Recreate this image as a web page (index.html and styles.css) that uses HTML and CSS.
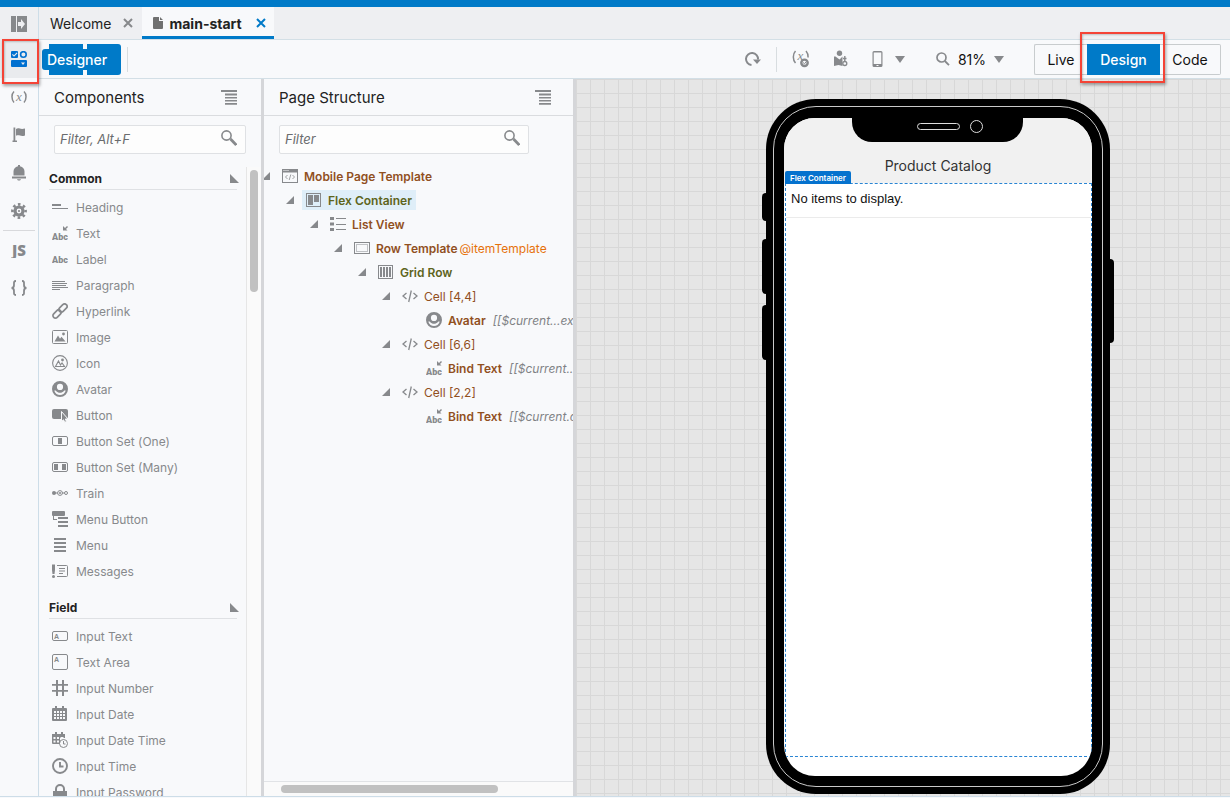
FILE: index.html
```html
<!DOCTYPE html>
<html lang="en">
<head>
<meta charset="utf-8">
<title>main-start - Designer</title>
<link rel="stylesheet" href="styles.css">
</head>
<body>
<svg class="sprite" aria-hidden="true">
  <symbol id="i-expand" viewBox="0 0 16 16"><path d="M0 0h5v16H0zM6 0h10v16H6zM7 6v4h3v3l4-5-4-5v3z" fill-rule="evenodd"/></symbol>
  <symbol id="i-parts" viewBox="0 0 16 16"><path fill-rule="evenodd" d="M1 0h5a1 1 0 0 1 1 1v5a1 1 0 0 1-1 1H1a1 1 0 0 1-1-1V1a1 1 0 0 1 1-1zM1 3.800l2 2 3.500-3.500-.8-.8L3 4.200l-1.200-1.200zM1 9h14a1 1 0 0 1 1 1v5a1 1 0 0 1-1 1H1a1 1 0 0 1-1-1v-5a1 1 0 0 1 1-1zM10 11.500l2 2.500 2-2.500z"/><circle cx="12.400" cy="3.500" r="2.800" fill="none" stroke="currentColor" stroke-width="1.600"/></symbol>
  <symbol id="i-var" viewBox="0 0 16 16"><path d="M3 2.500C.3 5 .3 10.500 3 13.500M13 2.500c2.700 2.500 2.700 8 0 11" fill="none" stroke="currentColor" stroke-width="1.500"/><text x="8" y="11.500" text-anchor="middle" class="glyph-x">x</text></symbol>
  <symbol id="i-flag" viewBox="0 0 16 16"><path d="M2.500 .5h1.800v13H6V15H1.500v-1.500h1zM5 2c3-1.800 4 1 9-.5v7c-4.500 1.800-5.500-1.200-9 .3z"/></symbol>
  <symbol id="i-bell" viewBox="0 0 16 16"><path d="M7 0h2v1.200c3 .6 4.500 2.800 4.500 5.300v4h-11v-4C2.500 4 4 1.800 7 1.200zM1 11.500h14v2H1zM6 14.200h4c-.4 1.800-3.600 1.800-4 0z"/></symbol>
  <symbol id="i-gear" viewBox="0 0 16 16"><g fill="none" stroke="currentColor"><circle cx="8" cy="8" r="4" stroke-width="3.200"/><circle cx="8" cy="8" r="6.600" stroke-width="2.600" stroke-dasharray="2.600 2.583" stroke-dashoffset="1.300"/></g><circle cx="8" cy="8" r="1.100"/></symbol>
  <symbol id="i-js" viewBox="0 0 16 16"><text x="8" y="13.500" text-anchor="middle" class="glyph-js">JS</text></symbol>
  <symbol id="i-braces" viewBox="0 0 16 16"><path d="M5 1C2.500 1 3 3 3 5c0 2-.8 3-2.500 3C2.200 8 3 9 3 11c0 2-.5 4 2 4M11 1c2.500 0 2 2 2 4 0 2 .8 3 2.500 3-1.700 0-2.500 1-2.500 3 0 2 .5 4-2 4" fill="none" stroke="currentColor" stroke-width="1.800"/></symbol>
  <symbol id="i-close" viewBox="0 0 10 10"><path d="M1 1l8 8M9 1L1 9" fill="none" stroke="currentColor" stroke-width="2"/></symbol>
  <symbol id="i-file" viewBox="0 0 10 12"><path d="M0 1a1 1 0 0 1 1-1h5v4h4v7a1 1 0 0 1-1 1H1a1 1 0 0 1-1-1zM7 0l3 3H7z"/></symbol>
  <symbol id="i-collapse" viewBox="0 0 16 15"><path d="M0 0h16v2H0zM4 3.500h12v2H4zM4 7h12v1.600H4zM4 10h12v1.600H4zM4 13h12v1.800H4z"/></symbol>
  <symbol id="i-search" viewBox="0 0 16 16"><circle cx="5.500" cy="5.500" r="4.600" fill="none" stroke="currentColor" stroke-width="1.600"/><path d="M9.500 9l5.800 6" fill="none" stroke="currentColor" stroke-width="2.800"/></symbol>
  <symbol id="i-zoom" viewBox="0 0 14 14"><circle cx="5.500" cy="5.500" r="4.500" fill="none" stroke="currentColor" stroke-width="1.700"/><path d="M8.800 9l4.200 4.200" fill="none" stroke="currentColor" stroke-width="1.800"/></symbol>
  <symbol id="i-down" viewBox="0 0 10 7"><path d="M0 0h10L5 7z"/></symbol>
  <symbol id="i-reload" viewBox="0 0 16 16"><path d="M6.500 14A6 6 0 1 1 13 8.500" fill="none" stroke="currentColor" stroke-width="2"/><path d="M8 8.500h8L12 13z"/></symbol>
  <symbol id="i-varcheck" viewBox="0 0 18 18"><path d="M3.500 1C.6 4 .6 10 3.500 13M14 1c1.800 2 2.300 4 2.100 6.500" fill="none" stroke="currentColor" stroke-width="1.500"/><text x="8.500" y="10" text-anchor="middle" class="glyph-x">x</text><circle cx="12.500" cy="12.800" r="3.200" fill="none" stroke="currentColor" stroke-width="2.400"/><path d="M11 12.500l1.500 1.300 2-2.500" fill="none" stroke="currentColor"/></symbol>
  <symbol id="i-person" viewBox="0 0 16 18"><circle cx="6.500" cy="3.300" r="2.700"/><path d="M1 6.500h1.500l4 3 3-3V16L5.500 15 1 16z"/><path d="M11.800 6v5M10 8.500h3.500" stroke="currentColor" stroke-width="1.400"/><circle cx="11.800" cy="13.500" r="2" fill="none" stroke="currentColor" stroke-width="1.300"/></symbol>
  <symbol id="i-phone" viewBox="0 0 12 16"><path fill-rule="evenodd" d="M2 0h7a1.500 1.500 0 0 1 1.500 1.500v13A1.500 1.500 0 0 1 9 16H2a1.500 1.500 0 0 1-1.500-1.500v-13A1.500 1.500 0 0 1 2 0zM1.700 1.500V13h7.600V1.500zM4.500 14v1h2v-1z"/></symbol>
  <symbol id="i-open" viewBox="0 0 9 9"><path d="M0 0v9h9z"/></symbol>
  <symbol id="i-twist" viewBox="0 0 8 8"><path d="M8 0v8H0z"/></symbol>
  <symbol id="i-heading" viewBox="0 0 16 16"><path d="M0 5h9v2H0zM0 9h16v1H0z"/></symbol>
  <symbol id="i-text" viewBox="0 0 16 16"><text x="0" y="15" class="glyph-abc">Abc</text><path d="M11 1v4.500h4.500L14 4l2-2-1-1-2 2z"/></symbol>
  <symbol id="i-label" viewBox="0 0 16 16"><text x="0" y="12" class="glyph-abc">Abc</text></symbol>
  <symbol id="i-para" viewBox="0 0 16 16"><path d="M0 4h13v1H0zM0 6h15v1H0zM0 8h14v1H0zM0 10h16v1H0zM0 12h8v1H0z"/></symbol>
  <symbol id="i-link" viewBox="0 0 16 16"><g fill="none" stroke="currentColor" stroke-width="1.700"><rect x="6.200" y="2.500" width="9.500" height="5" rx="2.500" transform="rotate(-45 11 5)"/><rect x=".3" y="8.500" width="9.500" height="5" rx="2.500" transform="rotate(-45 5 11)"/></g></symbol>
  <symbol id="i-image" viewBox="0 0 16 16"><rect x=".5" y="1.500" width="15" height="13" rx="1" fill="none" stroke="currentColor"/><path d="M2.500 12.500L6 6.500l2 3.200 1.500-2 4 4.800z"/><circle cx="11.500" cy="5" r="1.400"/></symbol>
  <symbol id="i-icon" viewBox="0 0 16 16"><circle cx="8" cy="8" r="7.400" fill="none" stroke="currentColor" stroke-width="1.100"/><path d="M3.500 11.500L6.500 6l2 4 1.500-2 2.500 3.500z" fill="none" stroke="currentColor" stroke-width="1.100"/><circle cx="10.500" cy="5" r="1.400"/></symbol>
  <symbol id="i-avatar" viewBox="0 0 16 16"><path fill-rule="evenodd" d="M8 0a8 8 0 1 1 0 16A8 8 0 0 1 8 0zM8 2.800a3.100 3.100 0 1 0 0 6.200 3.100 3.100 0 0 0 0-6.200zM2.300 9.800c.9 2.600 3.100 4.300 5.700 4.300s4.800-1.700 5.700-4.300c-.8-.3-1.300-.2-1.800.1-1 1.200-2.300 1.800-3.900 1.800s-2.900-.6-3.900-1.800c-.5-.3-1-.4-1.800-.1z"/></symbol>
  <symbol id="i-button" viewBox="0 0 16 16"><rect y="2" width="16" height="10" rx="2"/><path d="M9.500 4.500v10l2-1.700 1.200 2.500 1.800-.8-1.200-2.500H16z" stroke="#f8f9fb"/></symbol>
  <symbol id="i-one" viewBox="0 0 16 16"><rect x=".5" y="3.500" width="15" height="9" rx="1.500" fill="none" stroke="currentColor"/><path d="M6 5h4v6H6z"/></symbol>
  <symbol id="i-many" viewBox="0 0 16 16"><rect x=".5" y="3.500" width="15" height="9" rx="1.500" fill="none" stroke="currentColor"/><path d="M2 5h4v6H2zM10 5h4v6h-4z"/></symbol>
  <symbol id="i-train" viewBox="0 0 16 16"><circle cx="2" cy="8" r="2"/><path d="M3 8h3M10 8h2.500" stroke="currentColor"/><circle cx="8" cy="8" r="2.400" fill="none" stroke="currentColor"/><circle cx="8" cy="8" r="1"/><circle cx="14" cy="8" r="1.500" fill="none" stroke="currentColor"/></symbol>
  <symbol id="i-menubtn" viewBox="0 0 16 16"><rect width="13" height="5" rx="1"/><path d="M6 6h10v2H6zM6 10h10v2H6zM6 14h10v2H6zM1 5h1v3h3v1H1z"/></symbol>
  <symbol id="i-menu" viewBox="0 0 16 16"><path d="M2 1h12v2H2zM2 5h12v2H2zM2 9h12v2H2zM2 13h12v2H2z"/></symbol>
  <symbol id="i-msg" viewBox="0 0 16 16"><path d="M0 1.500h3V7l-.5 4h-2L0 7z"/><circle cx="1.500" cy="13.500" r="1.500"/><path d="M5 2.500h9.500a1 1 0 0 1 1 1v9a1 1 0 0 1-1 1H5M7 5.500h6M7 8h6M7 10.500h4" fill="none" stroke="currentColor"/></symbol>
  <symbol id="i-input" viewBox="0 0 16 16"><rect x=".5" y="3.500" width="15" height="9" rx="1.500" fill="none" stroke="currentColor"/><text x="2" y="11" class="glyph-a">A</text></symbol>
  <symbol id="i-area" viewBox="0 0 16 16"><rect x=".5" y=".5" width="15" height="15" rx="1.500" fill="none" stroke="currentColor"/><text x="2" y="8" class="glyph-a">A</text></symbol>
  <symbol id="i-number" viewBox="0 0 16 16"><path d="M4 0h2v16H4zM10 0h2v16h-2zM0 4h16v1.800H0zM0 10h16v1.800H0z"/></symbol>
  <symbol id="i-date" viewBox="0 0 16 16"><path fill-rule="evenodd" d="M1 2h2V0h2v2h5V0h2v2h2a1 1 0 0 1 1 1v11a1 1 0 0 1-1 1H1a1 1 0 0 1-1-1V3a1 1 0 0 1 1-1zM2 5v2h2V5zM5 5v2h2V5zM8 5v2h2V5zM11 5v2h2V5zM2 8v2h2V8zM5 8v2h2V8zM8 8v2h2V8zM11 8v2h2V8zM2 11v2h2v-2zM5 11v2h2v-2zM8 11v2h2v-2zM11 11v2h2v-2z"/></symbol>
  <symbol id="i-datetime" viewBox="0 0 16 16"><path fill-rule="evenodd" d="M0 2h3V0h2v2h4V0h2v2h2v4H8v6H1a1 1 0 0 1-1-1zM1.500 5v2h2V5zM5 5v2h2V5zM8.500 5v1h3V5zM1.500 8.500v2h2v-2zM5 8.500v2h2v-2z"/><circle cx="11.500" cy="11.500" r="4" fill="none" stroke="currentColor"/><path d="M11.500 9v3h2" fill="none" stroke="currentColor"/></symbol>
  <symbol id="i-time" viewBox="0 0 16 16"><circle cx="8" cy="8" r="7" fill="none" stroke="currentColor" stroke-width="1.900"/><path d="M8 4v4.500h3.500" fill="none" stroke="currentColor" stroke-width="1.900"/></symbol>
  <symbol id="i-lock" viewBox="0 0 16 16"><path d="M4 7V5a4 4 0 0 1 8 0v2" fill="none" stroke="currentColor" stroke-width="2"/><path d="M1 7h14v9H1z"/></symbol>
  <symbol id="i-template" viewBox="0 0 16 16"><path fill-rule="evenodd" d="M0 1h16v14H0zM1 4.500V14h14V4.500z"/><path d="M1.500 2.500h5" stroke="#f8f9fb" stroke-dasharray="1 1"/><path d="M5.500 7L3.500 9l2 2M10.500 7l2 2-2 2M8.800 6.500l-1.600 5.500" fill="none" stroke="currentColor" stroke-width=".8"/></symbol>
  <symbol id="i-flex" viewBox="0 0 16 16"><rect x=".5" y="1.500" width="14" height="13" fill="none" stroke="currentColor"/><path d="M2 3h5v10H2zM8 3h5v7H8z"/></symbol>
  <symbol id="i-list" viewBox="0 0 16 16"><path d="M0 1h4v3H0zM0 6.500h4v3H0zM0 12h4v3H0z"/><path d="M6 2.500h10M6 8.500h10M6 13.500h10" stroke="currentColor"/></symbol>
  <symbol id="i-row" viewBox="0 0 16 16"><rect x=".5" y="2.500" width="15" height="11" fill="none" stroke="currentColor"/><rect x="2.500" y="4.500" width="11" height="7" fill="none" stroke="currentColor" stroke-dasharray="1 1"/></symbol>
  <symbol id="i-grid" viewBox="0 0 16 16"><rect x=".5" y="1.500" width="14" height="13" fill="none" stroke="currentColor"/><path d="M2 3h2v10H2zM5 3h2v10H5zM8 3h2v10H8zM11 3h2v10h-2z"/></symbol>
  <symbol id="i-tag" viewBox="0 0 16 16"><path d="M4.500 5L1 8l3.500 3M11.500 5L15 8l-3.500 3M9.300 2.500L6.700 14" fill="none" stroke="currentColor" stroke-width="1.300"/></symbol>
</svg>

<div class="accent"></div>
<div class="app">
  <nav class="rail" aria-label="Navigator">
    <button class="rail-btn rail-first" aria-label="Expand"><svg class="ico"><use href="#i-expand"/></svg></button>
    <button class="rail-btn rail-active" aria-label="Components"><svg class="ico"><use href="#i-parts"/></svg></button>
    <button class="rail-btn" aria-label="Variables"><svg class="ico"><use href="#i-var"/></svg></button>
    <button class="rail-btn" aria-label="Actions"><svg class="ico"><use href="#i-flag"/></svg></button>
    <button class="rail-btn" aria-label="Events"><svg class="ico"><use href="#i-bell"/></svg></button>
    <button class="rail-btn" aria-label="Settings"><svg class="ico"><use href="#i-gear"/></svg></button>
    <hr class="rail-line">
    <button class="rail-btn" aria-label="JavaScript"><svg class="ico"><use href="#i-js"/></svg></button>
    <button class="rail-btn" aria-label="JSON"><svg class="ico"><use href="#i-braces"/></svg></button>
  </nav>

  <div class="main">
    <div class="tabs">
      <div class="tab"><a href="#welcome">Welcome</a><button class="tab-close" aria-label="Close Welcome"><svg><use href="#i-close"/></svg></button></div>
      <div class="tab tab-on"><svg class="tab-file"><use href="#i-file"/></svg><a href="#main-start">main-start</a><button class="tab-close" aria-label="Close main-start"><svg><use href="#i-close"/></svg></button></div>
    </div>

    <div class="toolbar">
      <button class="designer"><span class="designer-text">Designer</span></button>
      <span class="vline"></span>
      <div class="tools">
        <button class="tool" aria-label="Reload"><svg class="ico"><use href="#i-reload"/></svg></button>
        <span class="vline"></span>
        <button class="tool" aria-label="Variables"><svg class="ico-lg"><use href="#i-varcheck"/></svg></button>
        <button class="tool tool-person" aria-label="User"><svg class="ico-lg"><use href="#i-person"/></svg></button>
        <button class="tool tool-menu" aria-label="Device"><svg class="ico-phone"><use href="#i-phone"/></svg><svg class="ico-down"><use href="#i-down"/></svg></button>
        <button class="tool tool-zoom"><svg class="ico-zoom"><use href="#i-zoom"/></svg><span>81%</span><svg class="ico-down"><use href="#i-down"/></svg></button>
      </div>
      <div class="modes">
        <button class="mode mode-live">Live</button>
        <button class="mode mode-on">Design</button>
        <button class="mode mode-code">Code</button>
      </div>
    </div>

    <div class="panes">
      <section class="pane components">
        <header class="pane-head"><h2>Components</h2><button class="collapse" aria-label="Collapse"><svg><use href="#i-collapse"/></svg></button></header>
        <div class="filter"><label class="filter-box"><input type="text" aria-label="Filter components" placeholder="Filter, Alt+F"><svg class="ico"><use href="#i-search"/></svg></label></div>
        <div class="list-wrap">
          <div class="palette">
            <h3 class="group"><span>Common</span><svg><use href="#i-open"/></svg></h3>
            <ul class="items">
              <li><svg class="ico"><use href="#i-heading"/></svg>Heading</li>
              <li><svg class="ico"><use href="#i-text"/></svg>Text</li>
              <li><svg class="ico"><use href="#i-label"/></svg>Label</li>
              <li><svg class="ico"><use href="#i-para"/></svg>Paragraph</li>
              <li><svg class="ico"><use href="#i-link"/></svg>Hyperlink</li>
              <li><svg class="ico"><use href="#i-image"/></svg>Image</li>
              <li><svg class="ico"><use href="#i-icon"/></svg>Icon</li>
              <li><svg class="ico"><use href="#i-avatar"/></svg>Avatar</li>
              <li><svg class="ico"><use href="#i-button"/></svg>Button</li>
              <li><svg class="ico"><use href="#i-one"/></svg>Button Set (One)</li>
              <li><svg class="ico"><use href="#i-many"/></svg>Button Set (Many)</li>
              <li><svg class="ico"><use href="#i-train"/></svg>Train</li>
              <li><svg class="ico"><use href="#i-menubtn"/></svg>Menu Button</li>
              <li><svg class="ico"><use href="#i-menu"/></svg>Menu</li>
              <li><svg class="ico"><use href="#i-msg"/></svg>Messages</li>
            </ul>
            <h3 class="group"><span>Field</span><svg><use href="#i-open"/></svg></h3>
            <ul class="items">
              <li><svg class="ico"><use href="#i-input"/></svg>Input Text</li>
              <li><svg class="ico"><use href="#i-area"/></svg>Text Area</li>
              <li><svg class="ico"><use href="#i-number"/></svg>Input Number</li>
              <li><svg class="ico"><use href="#i-date"/></svg>Input Date</li>
              <li><svg class="ico"><use href="#i-datetime"/></svg>Input Date Time</li>
              <li><svg class="ico"><use href="#i-time"/></svg>Input Time</li>
              <li><svg class="ico"><use href="#i-lock"/></svg>Input Password</li>
            </ul>
          </div>
          <div class="vscroll"><div class="vthumb"></div></div>
        </div>
      </section>

      <section class="pane structure">
        <header class="pane-head"><h2>Page Structure</h2><button class="collapse" aria-label="Collapse"><svg><use href="#i-collapse"/></svg></button></header>
        <div class="filter"><label class="filter-box"><input type="text" aria-label="Filter structure" placeholder="Filter"><svg class="ico"><use href="#i-search"/></svg></label></div>
        <div class="tree" role="tree">
          <div class="node d0"><svg class="twist"><use href="#i-twist"/></svg><span class="cell"><svg class="ico"><use href="#i-template"/></svg><b>Mobile Page Template</b></span></div>
          <div class="node d1"><svg class="twist"><use href="#i-twist"/></svg><span class="cell picked"><svg class="ico"><use href="#i-flex"/></svg><b class="olive">Flex Container</b></span></div>
          <div class="node d2"><svg class="twist"><use href="#i-twist"/></svg><span class="cell"><svg class="ico"><use href="#i-list"/></svg><b>List View</b></span></div>
          <div class="node d3"><svg class="twist"><use href="#i-twist"/></svg><span class="cell"><svg class="ico"><use href="#i-row"/></svg><b>Row Template</b><span class="slot">@itemTemplate</span></span></div>
          <div class="node d4"><svg class="twist"><use href="#i-twist"/></svg><span class="cell"><svg class="ico"><use href="#i-grid"/></svg><b class="olive">Grid Row</b></span></div>
          <div class="node d5"><svg class="twist"><use href="#i-twist"/></svg><span class="cell"><svg class="ico"><use href="#i-tag"/></svg>Cell [4,4]</span></div>
          <div class="node d6"><span class="twist"></span><span class="cell"><svg class="ico"><use href="#i-avatar"/></svg><b>Avatar</b><i>[[$current...ext]]</i></span></div>
          <div class="node d5"><svg class="twist"><use href="#i-twist"/></svg><span class="cell"><svg class="ico"><use href="#i-tag"/></svg>Cell [6,6]</span></div>
          <div class="node d6"><span class="twist"></span><span class="cell"><svg class="ico"><use href="#i-text"/></svg><b>Bind Text</b><i>[[$current...]]</i></span></div>
          <div class="node d5"><svg class="twist"><use href="#i-twist"/></svg><span class="cell"><svg class="ico"><use href="#i-tag"/></svg>Cell [2,2]</span></div>
          <div class="node d6"><span class="twist"></span><span class="cell"><svg class="ico"><use href="#i-text"/></svg><b>Bind Text</b><i>[[$current.data]]</i></span></div>
        </div>
        <div class="hscroll"><div class="hthumb"></div></div>
      </section>

      <section class="canvas">
        <div class="phone">
          <span class="key key-a"></span><span class="key key-b"></span><span class="key key-c"></span><span class="key key-d"></span>
          <div class="screen">
            <div class="notch"><span class="speaker"></span><span class="camera"></span></div>
            <div class="page-title">Product Catalog</div>
            <div class="flexbox">
              <span class="flex-tag">Flex Container</span>
              <p class="empty">No items to display.</p>
            </div>
          </div>
        </div>
      </section>
    </div>
  </div>
</div>
<div class="mark mark-rail"></div>
<div class="mark mark-mode"></div>
</body>
</html>
```

FILE: styles.css
```css
* { box-sizing: border-box; }
body {
  margin: 0;
  height: 100vh;
  display: flex;
  flex-direction: column;
  overflow: hidden;
  position: relative;
  padding-bottom: 1px;
  font-family: Inter, "Liberation Sans", sans-serif;
  font-size: 12px;
  color: #222;
  background: #f8f9fb;
}
button { border: 0; padding: 0; margin: 0; background: none; font: inherit; color: inherit; display: flex; align-items: center; justify-content: center; }
h2, h3, ul, p { margin: 0; padding: 0; font-weight: 400; }
a { color: inherit; text-decoration: none; }
svg { fill: currentColor; flex: none; }
.sprite { display: none; }
.ico { width: 16px; height: 16px; }
.ico-lg { width: 18px; height: 18px; }
.glyph-x { font: italic 13px "Liberation Serif", serif; }
.glyph-js { font: 800 15px "Open Sans", sans-serif; }
.glyph-abc { font: 900 9px Roboto, sans-serif; }
.glyph-a { font: bold 7px "Liberation Sans", sans-serif; }

.accent { height: 7px; background: #007ac8; flex: none; }
.app { flex: 1; display: flex; min-height: 0; border-bottom: 1px solid #cddde8; }

.rail { width: 39px; flex: none; border-right: 1px solid #cddde8; color: #87898c; }
.rail-btn { width: 100%; height: 38px; }
.rail-first { height: 33px; background: #eeeff2; }
.rail-active { color: #0070d0; background: #e9ebee; }
.rail-line { margin: 0 3px; border: 0; height: 1px; background: #d8d9dc; }

.main { flex: 1; min-width: 0; display: flex; flex-direction: column; }
.tabs { display: flex; height: 33px; flex: none; background: #eeeff2; border-bottom: 1px solid #d3dfe6; font-size: 14px; }
.tab { display: flex; align-items: center; padding: 0 9px 0 11px; }
.tab-on { background: #f8f9fb; border-bottom: 3px solid #007ac8; padding: 3px 8px 0 11px; font-weight: 700; }
.tab-close { margin-left: 12px; color: #87898c; }
.tab-close svg { width: 10px; height: 10px; }
.tab-on .tab-close { color: #007ac8; margin-left: 14px; }
.tab-file { width: 10px; height: 12px; color: #707070; margin-right: 6px; }

.toolbar { display: flex; align-items: center; height: 39px; flex: none; border-bottom: 1px solid #d3dfe6; padding: 0 9px 0 3px; font-size: 14px; }
.designer { height: 31px; width: 79px; padding-left: 7px; justify-content: flex-start; color: #fff; font-weight: 500; background: linear-gradient(90deg, transparent 7px, #007ac8 7px, #007ac8 41px, transparent 41px, transparent 45px, #007ac8 45px); border-radius: 3px; }
.designer-text { background: #007ac8; border-radius: 3px; padding: 2px 4px 2px 5px; margin-left: -7px; }
.vline { width: 1px; height: 25px; background: #d8dde0; margin-left: 6px; }
.tools { margin-left: auto; display: flex; align-items: center; color: #87898c; }
.tools .vline { margin: 0 15px; }
.tool-person { margin-left: 22px; }
.tool-menu { margin-left: 22px; gap: 11px; }
.tool-zoom { margin-left: 31px; gap: 8px; }
.tool-zoom span { color: #111; }
.ico-phone { width: 12px; height: 16px; }
.ico-down { width: 10px; height: 7px; }
.ico-zoom { width: 14px; height: 14px; }
.modes { display: flex; margin-left: 30px; color: #111; }
.mode { height: 31px; border: 1px solid #c8ccce; }
.mode-live { width: 53px; border-right: 0; border-radius: 2px 0 0 2px; }
.mode-on { width: 73px; background: #007ac8; border: 0; color: #fff; font-weight: 500; }
.mode-code { width: 61px; border-left: 0; border-radius: 0 2px 2px 0; }

.panes { flex: 1; min-height: 0; display: flex; }
.pane { display: flex; flex-direction: column; min-height: 0; flex: none; border-right: 3px solid #d5d6d9; }
.components { width: 225px; }
.structure { width: 312px; overflow: hidden; }
.pane-head { display: flex; justify-content: space-between; align-items: center; height: 37px; flex: none; border-bottom: 1px solid #dadcdf; padding: 0 24px 0 15px; }
.structure .pane-head { padding-right: 22px; }
.pane-head h2 { font-size: 15px; }
.collapse { color: #87898c; }
.collapse svg { width: 16px; height: 15px; }
.filter { padding: 9px 15px 13px 15px; flex: none; }
.structure .filter { padding: 9px 44px 10px 15px; }
.filter-box { display: flex; align-items: center; height: 29px; border: 1px solid #dfe1e4; border-radius: 2px; background: #fdfdfd; padding: 0 8px 3px 5px; color: #87898c; }
.filter-box input { flex: 1; min-width: 0; border: 0; padding: 2px 0 0; background: none; outline: 0; font: italic 13px Inter, sans-serif; }
.filter-box input::placeholder { color: #6a6c6e; opacity: 1; }
.list-wrap { flex: 1; min-height: 0; display: flex; overflow: hidden; }
.palette { flex: 1; padding-left: 10px; padding-right: 9px; overflow: hidden; }
.group { display: flex; justify-content: space-between; align-items: center; height: 23px; border-bottom: 1px solid #dfe1e4; font-size: 12px; font-weight: 700; margin-bottom: 4px; }
.group svg { width: 9px; height: 9px; color: #87898c; margin-right: -2px; }
.items { list-style: none; padding: 0 0 12px 3px; color: #87898c; }
.items li { display: flex; align-items: center; gap: 8px; height: 26px; white-space: nowrap; }
.vscroll { width: 15px; border-left: 1px solid #e6e6e6; background: #fafafa; padding: 3px 3px 0; }
.vthumb { height: 122px; width: 8px; border-radius: 4px; background: #c1c1c1; }

.tree { flex: 1; overflow: hidden; color: #91501f; white-space: nowrap; }
.node { display: flex; align-items: center; height: 24px; }
.twist { width: 8px; height: 8px; color: #87898c; flex: none; margin-right: 8px; }
.cell { display: flex; align-items: center; height: 20px; padding: 0 4px; }
.cell .ico { color: #87898c; margin-right: 6px; }
.cell b { font-weight: 600; }
.cell i { color: #808285; margin-left: 7px; }
.cell .olive { color: #5e641c; }
.slot { color: #e6720b; margin-left: 2px; }
.picked { background: #dfeef8; }
.d0 { margin-left: -2px; }
.d1 { margin-left: 22px; }
.d2 { margin-left: 46px; }
.d3 { margin-left: 70px; }
.d4 { margin-left: 94px; }
.d5 { margin-left: 118px; }
.d6 { margin-left: 142px; }
.hscroll { height: 15px; flex: none; border-top: 1px solid #e1e3e6; background: #fafafa; padding: 3px 17px; }
.hthumb { width: 79%; height: 8px; border-radius: 4px; background: #c1c1c1; }

.canvas {
  flex: 1;
  min-width: 0;
  display: flex;
  justify-content: center;
  padding: 20px 0 2px 70px;
  background-color: #e6e6e6;
  background-image: linear-gradient(#d8d8d8 1px, transparent 1px), linear-gradient(90deg, #d8d8d8 1px, transparent 1px);
  background-size: 14px 14px;
  background-position: 14px 0;
}
.phone { position: relative; width: 344px; background: #000; border-radius: 50px; padding: 19px 18px 18px; display: flex; }
.phone::before { content: ""; position: absolute; inset: 7px; border: 1px solid #c9c9c9; border-radius: 43px; }
.key { position: absolute; left: -4px; width: 8px; background: #000; border-radius: 4px; }
.key-a { top: 94px; height: 28px; }
.key-b { top: 140px; height: 55px; }
.key-c { top: 206px; height: 55px; }
.key-d { left: auto; right: -4px; top: 160px; height: 84px; }
.screen { position: relative; flex: 1; display: flex; flex-direction: column; background: #fff; border-radius: 31px; overflow: hidden; padding-bottom: 19px; }
.notch { position: absolute; top: 0; left: 50%; margin-left: -86px; width: 171px; height: 24px; background: #000; border-radius: 0 0 20px 20px; display: flex; justify-content: flex-end; gap: 10px; padding: 2px 40px 0 0; }
.speaker { width: 43px; height: 7px; border: 1px solid #ddd; border-radius: 4px; margin-top: 3px; }
.camera { width: 13px; height: 13px; border: 1px solid #ddd; border-radius: 50%; }
.page-title { height: 65px; flex: none; background: #f1f1f1; color: #333; font-size: 14px; text-align: center; padding-top: 39px; line-height: 18px; }
.flexbox { position: relative; flex: 1; border: 1px dashed #2a85d3; margin-left: 1px; }
.flex-tag { position: absolute; left: -1px; top: -13px; height: 13px; line-height: 14px; padding: 0 5px; background: #0572ce; color: #fff; font-size: 8px; font-weight: 600; border-radius: 2px 2px 0 0; }
.empty { color: #111; font-family: "Liberation Sans", sans-serif; font-size: 13px; line-height: 16px; padding: 7px 5px 10px; border-bottom: 1px solid #ebebeb; }

.mark { position: absolute; border: 2px solid #f44336; box-shadow: 1px 2px 3px rgba(0, 0, 0, .35), inset 1px 1px 2px rgba(0, 0, 0, .2); pointer-events: none; }
.mark-rail { left: 2px; top: 39px; width: 37px; height: 45px; }
.mark-mode { right: 65px; top: 32px; width: 85px; height: 51px; }
```
